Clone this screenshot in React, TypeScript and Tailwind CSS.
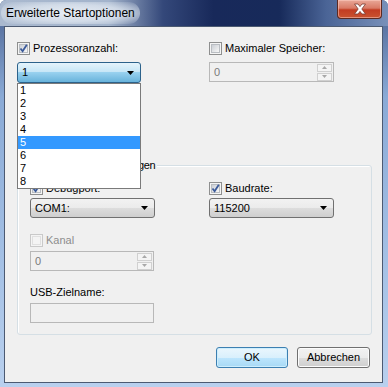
import React from "react";

const font = "font-['Segoe_UI','Liberation_Sans',Arial,sans-serif] text-[11px] leading-[13px] text-black";

function Check({ checked, disabled }: { checked?: boolean; disabled?: boolean }) {
  return (
    <span
      className={`flex h-[13px] w-[13px] shrink-0 items-center justify-center border ${
        disabled ? "border-[#c9c9c9] bg-[#f4f4f4]" : "border-[#8e8f8f] bg-[#f4f4f4]"
      }`}
    >
      <span
        className={`relative flex h-[9px] w-[9px] items-center justify-center border ${
          disabled
            ? "border-[#e0e0e0] bg-[#f4f4f4]"
            : "border-[#b9bdc2] bg-[linear-gradient(135deg,#cbcfd5,#f7f7f7)]"
        }`}
      >
        {checked && (
          <svg width="9" height="9" viewBox="0 0 9 9" className="absolute -left-[1px] -top-[1px]">
            <path d="M1.5 4.5 L3.6 7.2 L7.8 0.8" fill="none" stroke="#3b5a9a" strokeWidth="1.8" />
          </svg>
        )}
      </span>
    </span>
  );
}

function CheckRow({
  label,
  checked,
  disabled,
}: {
  label: string;
  checked?: boolean;
  disabled?: boolean;
}) {
  return (
    <div className="flex h-[13px] items-center gap-[3px]">
      <Check checked={checked} disabled={disabled} />
      <span className={disabled ? "text-[#8d8d8d]" : ""}>{label}</span>
    </div>
  );
}

function Arrow() {
  return (
    <svg width="7" height="4" viewBox="0 0 7 4" className="shrink-0">
      <polygon points="0,0 7,0 3.5,4" fill="#000" />
    </svg>
  );
}

function Combo({ value, open, w }: { value: string; open?: boolean; w: string }) {
  return (
    <div
      className={`flex h-[20px] ${w} items-center rounded-[3px] border pl-[4px] pr-[6px] ${
        open
          ? "border-[#2c628b] bg-[linear-gradient(180deg,#e5f4fc_0%,#c4e5f6_50%,#98d1ef_50%,#68b3db_100%)]"
          : "border-[#707070] bg-[linear-gradient(180deg,#f2f2f2_0%,#ebebeb_50%,#dddddd_50%,#cfcfcf_100%)]"
      }`}
    >
      <span className="flex-1">{value}</span>
      <Arrow />
    </div>
  );
}

function SpinBtn({ up }: { up?: boolean }) {
  return (
    <div className="flex h-[8px] w-[15px] items-center justify-center border border-[#d0d0d0] bg-[#f4f4f4]">
      <svg width="5" height="3" viewBox="0 0 5 3">
        <polygon points={up ? "0,3 5,3 2.5,0" : "0,0 5,0 2.5,3"} fill="#a8a8a8" />
      </svg>
    </div>
  );
}

function Spin({ w }: { w: string }) {
  return (
    <div className={`flex h-[20px] ${w} items-center border border-[#b8b8b8] bg-[#f0f0f0] pl-[4px] pr-[1px]`}>
      <span className="flex-1 text-[#7a7a7a]">0</span>
      <div className="flex flex-col gap-[1px]">
        <SpinBtn up />
        <SpinBtn />
      </div>
    </div>
  );
}

function Button({ label, primary }: { label: string; primary?: boolean }) {
  return (
    <div
      className={`flex h-[21px] items-center justify-center rounded-[3px] border ${
        primary
          ? "w-[72px] border-[#3c7fb1] bg-[linear-gradient(180deg,#eaf6fd_0%,#d9f0fc_50%,#bee6fd_50%,#a7d9f5_100%)] shadow-[inset_0_0_0_1px_#cdeefd]"
          : "w-[73px] border-[#707070] bg-[linear-gradient(180deg,#f2f2f2_0%,#ebebeb_50%,#dddddd_50%,#cfcfcf_100%)] shadow-[inset_0_0_0_1px_#fcfcfc]"
      }`}
    >
      {label}
    </div>
  );
}

export default function App() {
  const items = ["1", "2", "3", "4", "5", "6", "7", "8"];

  return (
    <div className={`${font} flex h-[387px] w-[388px] flex-col overflow-hidden rounded-t-[6px] bg-[linear-gradient(180deg,#4a6190_0%,#8aaad6_25%,#a6c2e6_70%,#b9d0ee_100%)]`}>
      {/* title bar */}
      <div className="relative flex h-[26px] shrink-0 items-center bg-[linear-gradient(90deg,#aab9cf_0%,#a3b4cc_28%,#34487a_42%,#18295a_55%,#172a5a_72%,#4a6496_84%,#7890b9_100%)]">
        <span className="ml-[1px] rounded-[12px] bg-[radial-gradient(ellipse_at_center,rgba(235,240,246,0.95)_0%,rgba(220,228,238,0.8)_55%,rgba(200,212,228,0)_100%)] px-[5px] py-[4px] text-[12px] leading-[14px]">
          Erweiterte Startoptionen
        </span>
        <div className="ml-auto mr-[6px] flex h-[19px] w-[45px] self-start items-center justify-center rounded-b-[4px] border border-t-0 border-[#5c2a22] bg-[linear-gradient(180deg,#e9a898_0%,#d97a66_45%,#c23c22_55%,#c9532f_100%)] shadow-[inset_0_0_0_1px_rgba(255,210,200,0.5)]">
          <svg width="14" height="12" viewBox="0 0 14 12">
            <path
              d="M1.5 1 H5 L7 3.6 L9 1 H12.5 L8.8 6 L12.5 11 H9 L7 8.4 L5 11 H1.5 L5.2 6 Z"
              fill="#ffffff"
              stroke="#7a3a30"
              strokeWidth="0.8"
            />
          </svg>
        </div>
      </div>

      {/* client area */}
      <div className="mb-[4px] ml-[4px] mr-[5px] flex flex-1 flex-col border border-[#4c5a72] bg-[#f0f0f0] pl-[12px] pr-[10px] pt-[15px]">
        <div className="flex">
          <div className="flex w-[192px] flex-col">
            <CheckRow label="Prozessoranzahl:" checked />
            <div className="relative mt-[7px] w-[124px]">
              <Combo value="1" open w="w-[124px] h-[21px]" />
              <div className="absolute left-0 top-full z-10 flex w-[124px] flex-col border border-[#7a7a7a] bg-white">
                {items.map((n) => (
                  <div
                    key={n}
                    className={`h-[13px] pl-[2px] ${n === "5" ? "bg-[#3399ff] text-white" : ""}`}
                  >
                    {n}
                  </div>
                ))}
              </div>
            </div>
          </div>
          <div className="flex flex-col">
            <CheckRow label="Maximaler Speicher:" />
            <div className="mt-[7px]">
              <Spin w="w-[125px]" />
            </div>
          </div>
        </div>

        <div className="flex flex-col gap-[9px] pt-[13px]">
          <CheckRow label="PCI sperren" />
          <CheckRow label="Debug" />
        </div>

        {/* group box */}
        <div className="relative mt-[34px] flex h-[170px] w-[355px] rounded-[3px] border border-[#d5dfe5] pl-[12px] pt-[16px] shadow-[inset_1px_1px_0_#ffffff]">
          <span className="absolute -top-[7px] left-[5px] bg-[#f0f0f0] px-[2px] tracking-[-0.3px]">
            Globale Debugeinstellungen
          </span>
          <div className="flex w-[179px] flex-col">
            <CheckRow label="Debugport:" checked />
            <div className="mt-[3px]">
              <Combo value="COM1:" w="w-[125px]" />
            </div>
            <div className="mt-[16px]">
              <CheckRow label="Kanal" disabled />
            </div>
            <div className="mt-[4px]">
              <Spin w="w-[124px]" />
            </div>
            <div className="mt-[15px] h-[13px]">USB-Zielname:</div>
            <div className="mt-[4px] h-[20px] w-[124px] border border-[#b8b8b8] bg-[#f0f0f0]" />
          </div>
          <div className="flex flex-col">
            <CheckRow label="Baudrate:" checked />
            <div className="mt-[3px]">
              <Combo value="115200" w="w-[125px]" />
            </div>
          </div>
        </div>

        <div className="mt-[12px] flex w-[355px] justify-end gap-[9px] pr-[2px]">
          <Button label="OK" primary />
          <Button label="Abbrechen" />
        </div>
      </div>
    </div>
  );
}
